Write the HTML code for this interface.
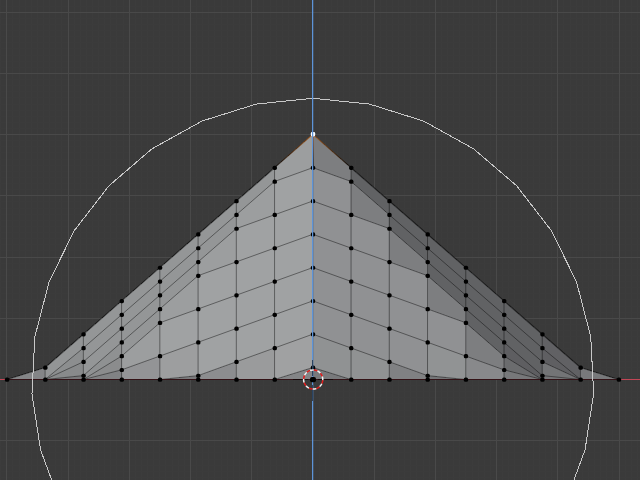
<!DOCTYPE html><html><head><meta charset="utf-8"><style>html,body{margin:0;padding:0;background:#3a3a3a;overflow:hidden;width:640px;height:480px}svg{display:block}</style></head><body><svg width="640" height="480" viewBox="0 0 640 480"><defs><linearGradient id="g0" gradientUnits="userSpaceOnUse" x1="312.8" y1="134.4" x2="274.56" y2="167.7"><stop offset="0" stop-color="#a85410"/><stop offset="1" stop-color="#000"/></linearGradient><linearGradient id="g1" gradientUnits="userSpaceOnUse" x1="312.8" y1="134.4" x2="351.04" y2="167.7"><stop offset="0" stop-color="#a85410"/><stop offset="1" stop-color="#000"/></linearGradient><linearGradient id="g2" gradientUnits="userSpaceOnUse" x1="313.4" y1="134.4" x2="313.4" y2="167.7"><stop offset="0" stop-color="#a85410"/><stop offset="1" stop-color="#000"/></linearGradient></defs><rect width="640" height="480" fill="#3a3a3a"/><path d="M0.5 0V480M12.5 0V480M19.5 0V480M25.5 0V480M31.5 0V480M37.5 0V480M43.5 0V480M49.5 0V480M55.5 0V480M61.5 0V480M74.5 0V480M80.5 0V480M86.5 0V480M92.5 0V480M98.5 0V480M104.5 0V480M110.5 0V480M116.5 0V480M123.5 0V480M135.5 0V480M141.5 0V480M147.5 0V480M153.5 0V480M159.5 0V480M165.5 0V480M172.5 0V480M178.5 0V480M184.5 0V480M196.5 0V480M202.5 0V480M208.5 0V480M214.5 0V480M221.5 0V480M227.5 0V480M233.5 0V480M239.5 0V480M245.5 0V480M257.5 0V480M263.5 0V480M270.5 0V480M276.5 0V480M282.5 0V480M288.5 0V480M294.5 0V480M300.5 0V480M306.5 0V480M319.5 0V480M325.5 0V480M331.5 0V480M337.5 0V480M343.5 0V480M349.5 0V480M355.5 0V480M361.5 0V480M367.5 0V480M380.5 0V480M386.5 0V480M392.5 0V480M398.5 0V480M404.5 0V480M410.5 0V480M416.5 0V480M423.5 0V480M429.5 0V480M441.5 0V480M447.5 0V480M453.5 0V480M459.5 0V480M465.5 0V480M472.5 0V480M478.5 0V480M484.5 0V480M490.5 0V480M502.5 0V480M508.5 0V480M514.5 0V480M521.5 0V480M527.5 0V480M533.5 0V480M539.5 0V480M545.5 0V480M551.5 0V480M563.5 0V480M570.5 0V480M576.5 0V480M582.5 0V480M588.5 0V480M594.5 0V480M600.5 0V480M606.5 0V480M612.5 0V480M625.5 0V480M631.5 0V480M637.5 0V480" stroke="#3c3c3c" stroke-width="1" shape-rendering="crispEdges"/><path d="M0 6.5H640M0 18.5H640M0 24.5H640M0 30.5H640M0 36.5H640M0 42.5H640M0 48.5H640M0 55.5H640M0 61.5H640M0 67.5H640M0 79.5H640M0 85.5H640M0 91.5H640M0 97.5H640M0 104.5H640M0 110.5H640M0 116.5H640M0 122.5H640M0 128.5H640M0 140.5H640M0 146.5H640M0 152.5H640M0 159.5H640M0 165.5H640M0 171.5H640M0 177.5H640M0 183.5H640M0 189.5H640M0 201.5H640M0 208.5H640M0 214.5H640M0 220.5H640M0 226.5H640M0 232.5H640M0 238.5H640M0 244.5H640M0 250.5H640M0 263.5H640M0 269.5H640M0 275.5H640M0 281.5H640M0 287.5H640M0 293.5H640M0 299.5H640M0 306.5H640M0 312.5H640M0 324.5H640M0 330.5H640M0 336.5H640M0 342.5H640M0 348.5H640M0 355.5H640M0 361.5H640M0 367.5H640M0 373.5H640M0 385.5H640M0 391.5H640M0 397.5H640M0 403.5H640M0 410.5H640M0 416.5H640M0 422.5H640M0 428.5H640M0 434.5H640M0 446.5H640M0 452.5H640M0 459.5H640M0 465.5H640M0 471.5H640M0 477.5H640" stroke="#3b3b3b" stroke-width="1" shape-rendering="crispEdges"/><path d="M6.5 0V480M68.5 0V480M129.5 0V480M190.5 0V480M251.5 0V480M374.5 0V480M435.5 0V480M496.5 0V480M557.5 0V480M619.5 0V480M0 12.5H640M0 73.5H640M0 134.5H640M0 195.5H640M0 257.5H640M0 318.5H640M0 440.5H640" stroke="#494949" stroke-width="1" shape-rendering="crispEdges"/><g shape-rendering="crispEdges"><polygon points="6.88,379.5 45.12,367.5 45.12,379.5 6.88,379.5" fill="#848587"/><polygon points="45.12,367.5 83.36,334.2 83.36,347.99 45.12,379.5" fill="#939596"/><polygon points="83.36,334.2 121.6,300.9 121.6,314.69 83.36,347.99" fill="#949697"/><polygon points="121.6,300.9 159.84,267.6 159.84,281.39 121.6,314.69" fill="#949697"/><polygon points="159.84,267.6 198.08,234.3 198.08,248.09 159.84,281.39" fill="#949697"/><polygon points="198.08,234.3 236.32,201 236.32,214.79 198.08,248.09" fill="#949697"/><polygon points="236.32,201 274.56,167.7 274.56,181.49 236.32,214.79" fill="#949697"/><polygon points="274.56,167.7 312.8,134.4 312.8,167.7 274.56,181.49" fill="#9c9e9f"/><polygon points="312.8,134.4 351.04,167.7 351.04,181.49 312.8,167.7" fill="#7d7e80"/><polygon points="351.04,167.7 389.28,201 389.28,214.79 351.04,181.49" fill="#616264"/><polygon points="389.28,201 427.52,234.3 427.52,248.09 389.28,214.79" fill="#616264"/><polygon points="427.52,234.3 465.76,267.6 465.76,281.39 427.52,248.09" fill="#616264"/><polygon points="465.76,267.6 504,300.9 504,314.69 465.76,281.39" fill="#616264"/><polygon points="504,300.9 542.24,334.2 542.24,347.99 504,314.69" fill="#616264"/><polygon points="542.24,334.2 580.48,367.5 580.48,379.5 542.24,347.99" fill="#616164"/><polygon points="580.48,367.5 618.72,379.5 618.72,379.5 580.48,379.5" fill="#78797b"/><polygon points="45.12,379.5 83.36,347.99 83.36,361.79 45.12,379.5" fill="#8c8e8f"/><polygon points="83.36,347.99 121.6,314.69 121.6,328.49 83.36,361.79" fill="#949697"/><polygon points="121.6,314.69 159.84,281.39 159.84,295.19 121.6,328.49" fill="#949697"/><polygon points="159.84,281.39 198.08,248.09 198.08,261.89 159.84,295.19" fill="#949697"/><polygon points="198.08,248.09 236.32,214.79 236.32,228.59 198.08,261.89" fill="#949697"/><polygon points="236.32,214.79 274.56,181.49 274.56,214.79 236.32,228.59" fill="#9c9e9f"/><polygon points="274.56,181.49 312.8,167.7 312.8,201 274.56,214.79" fill="#a0a2a3"/><polygon points="312.8,167.7 351.04,181.49 351.04,214.79 312.8,201" fill="#909193"/><polygon points="351.04,181.49 389.28,214.79 389.28,228.59 351.04,214.79" fill="#7d7e80"/><polygon points="389.28,214.79 427.52,248.09 427.52,261.89 389.28,228.59" fill="#616264"/><polygon points="427.52,248.09 465.76,281.39 465.76,295.19 427.52,261.89" fill="#616264"/><polygon points="465.76,281.39 504,314.69 504,328.49 465.76,295.19" fill="#616264"/><polygon points="504,314.69 542.24,347.99 542.24,361.79 504,328.49" fill="#616264"/><polygon points="542.24,347.99 580.48,379.5 580.48,379.5 542.24,361.79" fill="#5f5f62"/><polygon points="45.12,379.5 83.36,361.79 83.36,375.58 45.12,379.5" fill="#888a8b"/><polygon points="83.36,361.79 121.6,328.49 121.6,342.28 83.36,375.58" fill="#949697"/><polygon points="121.6,328.49 159.84,295.19 159.84,308.98 121.6,342.28" fill="#949697"/><polygon points="159.84,295.19 198.08,261.89 198.08,275.68 159.84,308.98" fill="#949697"/><polygon points="198.08,261.89 236.32,228.59 236.32,261.89 198.08,275.68" fill="#9c9e9f"/><polygon points="236.32,228.59 274.56,214.79 274.56,248.09 236.32,261.89" fill="#a0a2a3"/><polygon points="274.56,214.79 312.8,201 312.8,234.3 274.56,248.09" fill="#a0a2a3"/><polygon points="312.8,201 351.04,214.79 351.04,248.09 312.8,234.3" fill="#909193"/><polygon points="351.04,214.79 389.28,228.59 389.28,261.89 351.04,248.09" fill="#909193"/><polygon points="389.28,228.59 427.52,261.89 427.52,275.68 389.28,261.89" fill="#7d7e80"/><polygon points="427.52,261.89 465.76,295.19 465.76,308.98 427.52,275.68" fill="#616264"/><polygon points="465.76,295.19 504,328.49 504,342.28 465.76,308.98" fill="#616264"/><polygon points="504,328.49 542.24,361.79 542.24,375.58 504,342.28" fill="#616264"/><polygon points="542.24,361.79 580.48,379.5 580.48,379.5 542.24,375.58" fill="#737476"/><polygon points="45.12,379.5 83.36,375.58 83.36,379.5 45.12,379.5" fill="#79797b"/><polygon points="83.36,375.58 121.6,342.28 121.6,356.07 83.36,379.5" fill="#8f9192"/><polygon points="121.6,342.28 159.84,308.98 159.84,322.77 121.6,356.07" fill="#949697"/><polygon points="159.84,308.98 198.08,275.68 198.08,308.98 159.84,322.77" fill="#9c9e9f"/><polygon points="198.08,275.68 236.32,261.89 236.32,295.19 198.08,308.98" fill="#a0a2a3"/><polygon points="236.32,261.89 274.56,248.09 274.56,281.39 236.32,295.19" fill="#a0a2a3"/><polygon points="274.56,248.09 312.8,234.3 312.8,267.6 274.56,281.39" fill="#a0a2a3"/><polygon points="312.8,234.3 351.04,248.09 351.04,281.39 312.8,267.6" fill="#909193"/><polygon points="351.04,248.09 389.28,261.89 389.28,295.19 351.04,281.39" fill="#909193"/><polygon points="389.28,261.89 427.52,275.68 427.52,308.98 389.28,295.19" fill="#909193"/><polygon points="427.52,275.68 465.76,308.98 465.76,322.77 427.52,308.98" fill="#7d7e80"/><polygon points="465.76,308.98 504,342.28 504,356.07 465.76,322.77" fill="#616264"/><polygon points="504,342.28 542.24,375.58 542.24,379.5 504,356.07" fill="#5e5e61"/><polygon points="542.24,375.58 580.48,379.5 580.48,379.5 542.24,379.5" fill="#747577"/><polygon points="83.36,379.5 121.6,356.07 121.6,369.87 83.36,379.5" fill="#8b8c8d"/><polygon points="121.6,356.07 159.84,322.77 159.84,356.07 121.6,369.87" fill="#9c9e9f"/><polygon points="159.84,322.77 198.08,308.98 198.08,342.28 159.84,356.07" fill="#a0a2a3"/><polygon points="198.08,308.98 236.32,295.19 236.32,328.49 198.08,342.28" fill="#a0a2a3"/><polygon points="236.32,295.19 274.56,281.39 274.56,314.69 236.32,328.49" fill="#a0a2a3"/><polygon points="274.56,281.39 312.8,267.6 312.8,300.9 274.56,314.69" fill="#a0a2a3"/><polygon points="312.8,267.6 351.04,281.39 351.04,314.69 312.8,300.9" fill="#909193"/><polygon points="351.04,281.39 389.28,295.19 389.28,328.49 351.04,314.69" fill="#909193"/><polygon points="389.28,295.19 427.52,308.98 427.52,342.28 389.28,328.49" fill="#909193"/><polygon points="427.52,308.98 465.76,322.77 465.76,356.07 427.52,342.28" fill="#909193"/><polygon points="465.76,322.77 504,356.07 504,369.87 465.76,356.07" fill="#7d7e80"/><polygon points="504,356.07 542.24,379.5 542.24,379.5 504,369.87" fill="#6b6c6e"/><polygon points="83.36,379.5 121.6,369.87 121.6,379.5 83.36,379.5" fill="#818284"/><polygon points="121.6,369.87 159.84,356.07 159.84,379.5 121.6,379.5" fill="#939496"/><polygon points="159.84,356.07 198.08,342.28 198.08,375.58 159.84,379.5" fill="#9d9e9f"/><polygon points="198.08,342.28 236.32,328.49 236.32,361.79 198.08,375.58" fill="#a0a2a3"/><polygon points="236.32,328.49 274.56,314.69 274.56,347.99 236.32,361.79" fill="#a0a2a3"/><polygon points="274.56,314.69 312.8,300.9 312.8,334.2 274.56,347.99" fill="#a0a2a3"/><polygon points="312.8,300.9 351.04,314.69 351.04,347.99 312.8,334.2" fill="#909193"/><polygon points="351.04,314.69 389.28,328.49 389.28,361.79 351.04,347.99" fill="#909193"/><polygon points="389.28,328.49 427.52,342.28 427.52,375.58 389.28,361.79" fill="#909193"/><polygon points="427.52,342.28 465.76,356.07 465.76,379.5 427.52,375.58" fill="#919394"/><polygon points="465.76,356.07 504,369.87 504,379.5 465.76,379.5" fill="#88898b"/><polygon points="504,369.87 542.24,379.5 542.24,379.5 504,379.5" fill="#77787a"/><polygon points="159.84,379.5 198.08,375.58 198.08,379.5 159.84,379.5" fill="#79797b"/><polygon points="198.08,375.58 236.32,361.79 236.32,379.5 198.08,379.5" fill="#8c8d8f"/><polygon points="236.32,361.79 274.56,347.99 274.56,379.5 236.32,379.5" fill="#9a9b9c"/><polygon points="274.56,347.99 312.8,334.2 312.8,367.5 274.56,379.5" fill="#a0a1a2"/><polygon points="312.8,334.2 351.04,347.99 351.04,379.5 312.8,367.5" fill="#909293"/><polygon points="351.04,347.99 389.28,361.79 389.28,379.5 351.04,379.5" fill="#909293"/><polygon points="389.28,361.79 427.52,375.58 427.52,379.5 389.28,379.5" fill="#808183"/><polygon points="427.52,375.58 465.76,379.5 465.76,379.5 427.52,379.5" fill="#747577"/><polygon points="274.56,379.5 312.8,367.5 312.8,379.5 274.56,379.5" fill="#848587"/><polygon points="312.8,367.5 351.04,379.5 351.04,379.5 312.8,379.5" fill="#78797b"/></g><path d="M6.88 379.5L45.12 379.5M45.12 379.5L83.36 347.99M83.36 347.99L121.6 314.69M121.6 314.69L159.84 281.39M159.84 281.39L198.08 248.09M198.08 248.09L236.32 214.79M236.32 214.79L274.56 181.49M274.56 181.49L312.8 167.7M312.8 167.7L351.04 181.49M351.04 181.49L389.28 214.79M389.28 214.79L427.52 248.09M427.52 248.09L465.76 281.39M465.76 281.39L504 314.69M504 314.69L542.24 347.99M542.24 347.99L580.48 379.5M580.48 379.5L618.72 379.5M6.88 379.5L45.12 379.5M45.12 379.5L83.36 361.79M83.36 361.79L121.6 328.49M121.6 328.49L159.84 295.19M159.84 295.19L198.08 261.89M198.08 261.89L236.32 228.59M236.32 228.59L274.56 214.79M274.56 214.79L312.8 201M312.8 201L351.04 214.79M351.04 214.79L389.28 228.59M389.28 228.59L427.52 261.89M427.52 261.89L465.76 295.19M465.76 295.19L504 328.49M504 328.49L542.24 361.79M542.24 361.79L580.48 379.5M580.48 379.5L618.72 379.5M6.88 379.5L45.12 379.5M45.12 379.5L83.36 375.58M83.36 375.58L121.6 342.28M121.6 342.28L159.84 308.98M159.84 308.98L198.08 275.68M198.08 275.68L236.32 261.89M236.32 261.89L274.56 248.09M274.56 248.09L312.8 234.3M312.8 234.3L351.04 248.09M351.04 248.09L389.28 261.89M389.28 261.89L427.52 275.68M427.52 275.68L465.76 308.98M465.76 308.98L504 342.28M504 342.28L542.24 375.58M542.24 375.58L580.48 379.5M580.48 379.5L618.72 379.5M6.88 379.5L45.12 379.5M45.12 379.5L83.36 379.5M83.36 379.5L121.6 356.07M121.6 356.07L159.84 322.77M159.84 322.77L198.08 308.98M198.08 308.98L236.32 295.19M236.32 295.19L274.56 281.39M274.56 281.39L312.8 267.6M312.8 267.6L351.04 281.39M351.04 281.39L389.28 295.19M389.28 295.19L427.52 308.98M427.52 308.98L465.76 322.77M465.76 322.77L504 356.07M504 356.07L542.24 379.5M542.24 379.5L580.48 379.5M580.48 379.5L618.72 379.5M6.88 379.5L45.12 379.5M45.12 379.5L83.36 379.5M83.36 379.5L121.6 369.87M121.6 369.87L159.84 356.07M159.84 356.07L198.08 342.28M198.08 342.28L236.32 328.49M236.32 328.49L274.56 314.69M274.56 314.69L312.8 300.9M312.8 300.9L351.04 314.69M351.04 314.69L389.28 328.49M389.28 328.49L427.52 342.28M427.52 342.28L465.76 356.07M465.76 356.07L504 369.87M504 369.87L542.24 379.5M542.24 379.5L580.48 379.5M580.48 379.5L618.72 379.5M6.88 379.5L45.12 379.5M45.12 379.5L83.36 379.5M83.36 379.5L121.6 379.5M121.6 379.5L159.84 379.5M159.84 379.5L198.08 375.58M198.08 375.58L236.32 361.79M236.32 361.79L274.56 347.99M274.56 347.99L312.8 334.2M312.8 334.2L351.04 347.99M351.04 347.99L389.28 361.79M389.28 361.79L427.52 375.58M427.52 375.58L465.76 379.5M465.76 379.5L504 379.5M504 379.5L542.24 379.5M542.24 379.5L580.48 379.5M580.48 379.5L618.72 379.5M6.88 379.5L45.12 379.5M45.12 379.5L83.36 379.5M83.36 379.5L121.6 379.5M121.6 379.5L159.84 379.5M159.84 379.5L198.08 379.5M198.08 379.5L236.32 379.5M236.32 379.5L274.56 379.5M274.56 379.5L312.8 367.5M312.8 367.5L351.04 379.5M351.04 379.5L389.28 379.5M389.28 379.5L427.52 379.5M427.52 379.5L465.76 379.5M465.76 379.5L504 379.5M504 379.5L542.24 379.5M542.24 379.5L580.48 379.5M580.48 379.5L618.72 379.5M6.88 379.5L45.12 379.5M45.12 379.5L83.36 379.5M83.36 379.5L121.6 379.5M121.6 379.5L159.84 379.5M159.84 379.5L198.08 379.5M198.08 379.5L236.32 379.5M236.32 379.5L274.56 379.5M274.56 379.5L312.8 379.5M312.8 379.5L351.04 379.5M351.04 379.5L389.28 379.5M389.28 379.5L427.52 379.5M427.52 379.5L465.76 379.5M465.76 379.5L504 379.5M504 379.5L542.24 379.5M542.24 379.5L580.48 379.5M580.48 379.5L618.72 379.5M45.12 367.5L45.12 379.5M83.36 334.2L83.36 347.99M121.6 300.9L121.6 314.69M159.84 267.6L159.84 281.39M198.08 234.3L198.08 248.09M236.32 201L236.32 214.79M274.56 167.7L274.56 181.49M351.04 167.7L351.04 181.49M389.28 201L389.28 214.79M427.52 234.3L427.52 248.09M465.76 267.6L465.76 281.39M504 300.9L504 314.69M542.24 334.2L542.24 347.99M580.48 367.5L580.48 379.5M83.36 347.99L83.36 361.79M121.6 314.69L121.6 328.49M159.84 281.39L159.84 295.19M198.08 248.09L198.08 261.89M236.32 214.79L236.32 228.59M274.56 181.49L274.56 214.79M312.8 167.7L312.8 201M351.04 181.49L351.04 214.79M389.28 214.79L389.28 228.59M427.52 248.09L427.52 261.89M465.76 281.39L465.76 295.19M504 314.69L504 328.49M542.24 347.99L542.24 361.79M83.36 361.79L83.36 375.58M121.6 328.49L121.6 342.28M159.84 295.19L159.84 308.98M198.08 261.89L198.08 275.68M236.32 228.59L236.32 261.89M274.56 214.79L274.56 248.09M312.8 201L312.8 234.3M351.04 214.79L351.04 248.09M389.28 228.59L389.28 261.89M427.52 261.89L427.52 275.68M465.76 295.19L465.76 308.98M504 328.49L504 342.28M542.24 361.79L542.24 375.58M83.36 375.58L83.36 379.5M121.6 342.28L121.6 356.07M159.84 308.98L159.84 322.77M198.08 275.68L198.08 308.98M236.32 261.89L236.32 295.19M274.56 248.09L274.56 281.39M312.8 234.3L312.8 267.6M351.04 248.09L351.04 281.39M389.28 261.89L389.28 295.19M427.52 275.68L427.52 308.98M465.76 308.98L465.76 322.77M504 342.28L504 356.07M542.24 375.58L542.24 379.5M121.6 356.07L121.6 369.87M159.84 322.77L159.84 356.07M198.08 308.98L198.08 342.28M236.32 295.19L236.32 328.49M274.56 281.39L274.56 314.69M312.8 267.6L312.8 300.9M351.04 281.39L351.04 314.69M389.28 295.19L389.28 328.49M427.52 308.98L427.52 342.28M465.76 322.77L465.76 356.07M504 356.07L504 369.87M121.6 369.87L121.6 379.5M159.84 356.07L159.84 379.5M198.08 342.28L198.08 375.58M236.32 328.49L236.32 361.79M274.56 314.69L274.56 347.99M312.8 300.9L312.8 334.2M351.04 314.69L351.04 347.99M389.28 328.49L389.28 361.79M427.52 342.28L427.52 375.58M465.76 356.07L465.76 379.5M504 369.87L504 379.5M198.08 375.58L198.08 379.5M236.32 361.79L236.32 379.5M274.56 347.99L274.56 379.5M312.8 334.2L312.8 367.5M351.04 347.99L351.04 379.5M389.28 361.79L389.28 379.5M427.52 375.58L427.52 379.5M312.8 367.5L312.8 379.5" stroke="#000" stroke-opacity="0.42" stroke-width="1" fill="none"/><path d="M6.88 379.5L45.12 367.5M45.12 367.5L83.36 334.2M83.36 334.2L121.6 300.9M121.6 300.9L159.84 267.6M159.84 267.6L198.08 234.3M198.08 234.3L236.32 201M236.32 201L274.56 167.7M351.04 167.7L389.28 201M389.28 201L427.52 234.3M427.52 234.3L465.76 267.6M465.76 267.6L504 300.9M504 300.9L542.24 334.2M542.24 334.2L580.48 367.5M580.48 367.5L618.72 379.5" stroke="#000" stroke-opacity="0.55" stroke-width="1.2" fill="none"/><rect x="0" y="379" width="6.88" height="1" fill="#c24656"/><rect x="618.72" y="379" width="21.28" height="1" fill="#c24656"/><rect x="6.88" y="379" width="611.84" height="1" fill="#331216"/><path d="M312.8 134.4L274.56 167.7" stroke="url(#g0)" stroke-opacity="0.8" stroke-width="1.1"/><path d="M312.8 134.4L351.04 167.7" stroke="url(#g1)" stroke-opacity="0.8" stroke-width="1.1"/><path d="M313.4 134.4L313.4 167.7" stroke="url(#g2)" stroke-opacity="0.8" stroke-width="1.1"/><g fill="#000"><rect x="4.93" y="377.55" width="4.3" height="4.2" rx="1.6"/><rect x="43.17" y="365.55" width="4.3" height="4.2" rx="1.6"/><rect x="81.41" y="332.25" width="4.3" height="4.2" rx="1.6"/><rect x="119.65" y="298.95" width="4.3" height="4.2" rx="1.6"/><rect x="157.89" y="265.65" width="4.3" height="4.2" rx="1.6"/><rect x="196.13" y="232.35" width="4.3" height="4.2" rx="1.6"/><rect x="234.37" y="199.05" width="4.3" height="4.2" rx="1.6"/><rect x="272.61" y="165.75" width="4.3" height="4.2" rx="1.6"/><rect x="349.09" y="165.75" width="4.3" height="4.2" rx="1.6"/><rect x="387.33" y="199.05" width="4.3" height="4.2" rx="1.6"/><rect x="425.57" y="232.35" width="4.3" height="4.2" rx="1.6"/><rect x="463.81" y="265.65" width="4.3" height="4.2" rx="1.6"/><rect x="502.05" y="298.95" width="4.3" height="4.2" rx="1.6"/><rect x="540.29" y="332.25" width="4.3" height="4.2" rx="1.6"/><rect x="578.53" y="365.55" width="4.3" height="4.2" rx="1.6"/><rect x="616.77" y="377.55" width="4.3" height="4.2" rx="1.6"/><rect x="43.17" y="377.55" width="4.3" height="4.2" rx="1.6"/><rect x="81.41" y="346.04" width="4.3" height="4.2" rx="1.6"/><rect x="119.65" y="312.74" width="4.3" height="4.2" rx="1.6"/><rect x="157.89" y="279.44" width="4.3" height="4.2" rx="1.6"/><rect x="196.13" y="246.14" width="4.3" height="4.2" rx="1.6"/><rect x="234.37" y="212.84" width="4.3" height="4.2" rx="1.6"/><rect x="272.61" y="179.54" width="4.3" height="4.2" rx="1.6"/><rect x="310.85" y="165.75" width="4.3" height="4.2" rx="1.6"/><rect x="349.09" y="179.54" width="4.3" height="4.2" rx="1.6"/><rect x="387.33" y="212.84" width="4.3" height="4.2" rx="1.6"/><rect x="425.57" y="246.14" width="4.3" height="4.2" rx="1.6"/><rect x="463.81" y="279.44" width="4.3" height="4.2" rx="1.6"/><rect x="502.05" y="312.74" width="4.3" height="4.2" rx="1.6"/><rect x="540.29" y="346.04" width="4.3" height="4.2" rx="1.6"/><rect x="578.53" y="377.55" width="4.3" height="4.2" rx="1.6"/><rect x="81.41" y="359.84" width="4.3" height="4.2" rx="1.6"/><rect x="119.65" y="326.54" width="4.3" height="4.2" rx="1.6"/><rect x="157.89" y="293.24" width="4.3" height="4.2" rx="1.6"/><rect x="196.13" y="259.94" width="4.3" height="4.2" rx="1.6"/><rect x="234.37" y="226.64" width="4.3" height="4.2" rx="1.6"/><rect x="272.61" y="212.84" width="4.3" height="4.2" rx="1.6"/><rect x="310.85" y="199.05" width="4.3" height="4.2" rx="1.6"/><rect x="349.09" y="212.84" width="4.3" height="4.2" rx="1.6"/><rect x="387.33" y="226.64" width="4.3" height="4.2" rx="1.6"/><rect x="425.57" y="259.94" width="4.3" height="4.2" rx="1.6"/><rect x="463.81" y="293.24" width="4.3" height="4.2" rx="1.6"/><rect x="502.05" y="326.54" width="4.3" height="4.2" rx="1.6"/><rect x="540.29" y="359.84" width="4.3" height="4.2" rx="1.6"/><rect x="81.41" y="373.63" width="4.3" height="4.2" rx="1.6"/><rect x="119.65" y="340.33" width="4.3" height="4.2" rx="1.6"/><rect x="157.89" y="307.03" width="4.3" height="4.2" rx="1.6"/><rect x="196.13" y="273.73" width="4.3" height="4.2" rx="1.6"/><rect x="234.37" y="259.94" width="4.3" height="4.2" rx="1.6"/><rect x="272.61" y="246.14" width="4.3" height="4.2" rx="1.6"/><rect x="310.85" y="232.35" width="4.3" height="4.2" rx="1.6"/><rect x="349.09" y="246.14" width="4.3" height="4.2" rx="1.6"/><rect x="387.33" y="259.94" width="4.3" height="4.2" rx="1.6"/><rect x="425.57" y="273.73" width="4.3" height="4.2" rx="1.6"/><rect x="463.81" y="307.03" width="4.3" height="4.2" rx="1.6"/><rect x="502.05" y="340.33" width="4.3" height="4.2" rx="1.6"/><rect x="540.29" y="373.63" width="4.3" height="4.2" rx="1.6"/><rect x="81.41" y="377.55" width="4.3" height="4.2" rx="1.6"/><rect x="119.65" y="354.12" width="4.3" height="4.2" rx="1.6"/><rect x="157.89" y="320.82" width="4.3" height="4.2" rx="1.6"/><rect x="196.13" y="307.03" width="4.3" height="4.2" rx="1.6"/><rect x="234.37" y="293.24" width="4.3" height="4.2" rx="1.6"/><rect x="272.61" y="279.44" width="4.3" height="4.2" rx="1.6"/><rect x="310.85" y="265.65" width="4.3" height="4.2" rx="1.6"/><rect x="349.09" y="279.44" width="4.3" height="4.2" rx="1.6"/><rect x="387.33" y="293.24" width="4.3" height="4.2" rx="1.6"/><rect x="425.57" y="307.03" width="4.3" height="4.2" rx="1.6"/><rect x="463.81" y="320.82" width="4.3" height="4.2" rx="1.6"/><rect x="502.05" y="354.12" width="4.3" height="4.2" rx="1.6"/><rect x="540.29" y="377.55" width="4.3" height="4.2" rx="1.6"/><rect x="119.65" y="367.92" width="4.3" height="4.2" rx="1.6"/><rect x="157.89" y="354.12" width="4.3" height="4.2" rx="1.6"/><rect x="196.13" y="340.33" width="4.3" height="4.2" rx="1.6"/><rect x="234.37" y="326.54" width="4.3" height="4.2" rx="1.6"/><rect x="272.61" y="312.74" width="4.3" height="4.2" rx="1.6"/><rect x="310.85" y="298.95" width="4.3" height="4.2" rx="1.6"/><rect x="349.09" y="312.74" width="4.3" height="4.2" rx="1.6"/><rect x="387.33" y="326.54" width="4.3" height="4.2" rx="1.6"/><rect x="425.57" y="340.33" width="4.3" height="4.2" rx="1.6"/><rect x="463.81" y="354.12" width="4.3" height="4.2" rx="1.6"/><rect x="502.05" y="367.92" width="4.3" height="4.2" rx="1.6"/><rect x="119.65" y="377.55" width="4.3" height="4.2" rx="1.6"/><rect x="157.89" y="377.55" width="4.3" height="4.2" rx="1.6"/><rect x="196.13" y="373.63" width="4.3" height="4.2" rx="1.6"/><rect x="234.37" y="359.84" width="4.3" height="4.2" rx="1.6"/><rect x="272.61" y="346.04" width="4.3" height="4.2" rx="1.6"/><rect x="310.85" y="332.25" width="4.3" height="4.2" rx="1.6"/><rect x="349.09" y="346.04" width="4.3" height="4.2" rx="1.6"/><rect x="387.33" y="359.84" width="4.3" height="4.2" rx="1.6"/><rect x="425.57" y="373.63" width="4.3" height="4.2" rx="1.6"/><rect x="463.81" y="377.55" width="4.3" height="4.2" rx="1.6"/><rect x="502.05" y="377.55" width="4.3" height="4.2" rx="1.6"/><rect x="196.13" y="377.55" width="4.3" height="4.2" rx="1.6"/><rect x="234.37" y="377.55" width="4.3" height="4.2" rx="1.6"/><rect x="272.61" y="377.55" width="4.3" height="4.2" rx="1.6"/><rect x="310.85" y="365.55" width="4.3" height="4.2" rx="1.6"/><rect x="349.09" y="377.55" width="4.3" height="4.2" rx="1.6"/><rect x="387.33" y="377.55" width="4.3" height="4.2" rx="1.6"/><rect x="425.57" y="377.55" width="4.3" height="4.2" rx="1.6"/><rect x="310.85" y="377.55" width="4.3" height="4.2" rx="1.6"/></g><polygon points="312.8,98.3 369.41,104.06 423.69,121.09 473.44,148.7 516.61,185.76 551.44,230.76 576.5,281.84 590.76,336.92 593.64,393.74 585.02,449.98 565.26,503.34 535.17,551.62 495.97,592.86 449.27,625.37 396.98,647.8 341.25,659.26 284.35,659.26 228.62,647.8 176.33,625.37 129.63,592.86 90.43,551.62 60.34,503.34 40.58,449.98 31.96,393.74 34.84,336.92 49.1,281.84 74.16,230.76 108.99,185.76 152.16,148.7 201.91,121.09 256.19,104.06" fill="none" stroke="#c8c8c8" stroke-width="1" shape-rendering="crispEdges"/><rect x="310.8" y="132.1" width="4.4" height="4.4" rx="1.4" fill="#fff"/><rect x="312" y="0" width="1" height="480" fill="#5d94d8"/><rect x="313" y="0" width="1" height="480" fill="#5d94d8" fill-opacity="0.25"/><path d="M312.5 359.5V376M312.5 384.5V400.5M293 379.5H308M318 379.5H333" stroke="#000" stroke-opacity="0.55" stroke-width="1" fill="none" shape-rendering="crispEdges"/><rect x="310" y="377" width="6" height="5.2" rx="2" fill="#000"/><path d="M322.78 380.13A9.6 9.6 0 0 1 321.81 383.75" stroke="#e41c1c" stroke-width="1.5" fill="none"/><path d="M321.81 383.75A9.6 9.6 0 0 1 319.53 386.72" stroke="#f2f2f2" stroke-width="1.5" fill="none"/><path d="M319.53 386.72A9.6 9.6 0 0 1 316.29 388.59" stroke="#e41c1c" stroke-width="1.5" fill="none"/><path d="M316.29 388.59A9.6 9.6 0 0 1 312.57 389.08" stroke="#f2f2f2" stroke-width="1.5" fill="none"/><path d="M312.57 389.08A9.6 9.6 0 0 1 308.95 388.11" stroke="#e41c1c" stroke-width="1.5" fill="none"/><path d="M308.95 388.11A9.6 9.6 0 0 1 305.98 385.83" stroke="#f2f2f2" stroke-width="1.5" fill="none"/><path d="M305.98 385.83A9.6 9.6 0 0 1 304.11 382.59" stroke="#e41c1c" stroke-width="1.5" fill="none"/><path d="M304.11 382.59A9.6 9.6 0 0 1 303.62 378.87" stroke="#f2f2f2" stroke-width="1.5" fill="none"/><path d="M303.62 378.87A9.6 9.6 0 0 1 304.59 375.25" stroke="#e41c1c" stroke-width="1.5" fill="none"/><path d="M304.59 375.25A9.6 9.6 0 0 1 306.87 372.28" stroke="#f2f2f2" stroke-width="1.5" fill="none"/><path d="M306.87 372.28A9.6 9.6 0 0 1 310.11 370.41" stroke="#e41c1c" stroke-width="1.5" fill="none"/><path d="M310.11 370.41A9.6 9.6 0 0 1 313.83 369.92" stroke="#f2f2f2" stroke-width="1.5" fill="none"/><path d="M313.83 369.92A9.6 9.6 0 0 1 317.45 370.89" stroke="#e41c1c" stroke-width="1.5" fill="none"/><path d="M317.45 370.89A9.6 9.6 0 0 1 320.42 373.17" stroke="#f2f2f2" stroke-width="1.5" fill="none"/><path d="M320.42 373.17A9.6 9.6 0 0 1 322.29 376.41" stroke="#e41c1c" stroke-width="1.5" fill="none"/><path d="M322.29 376.41A9.6 9.6 0 0 1 322.78 380.13" stroke="#f2f2f2" stroke-width="1.5" fill="none"/></svg></body></html>
